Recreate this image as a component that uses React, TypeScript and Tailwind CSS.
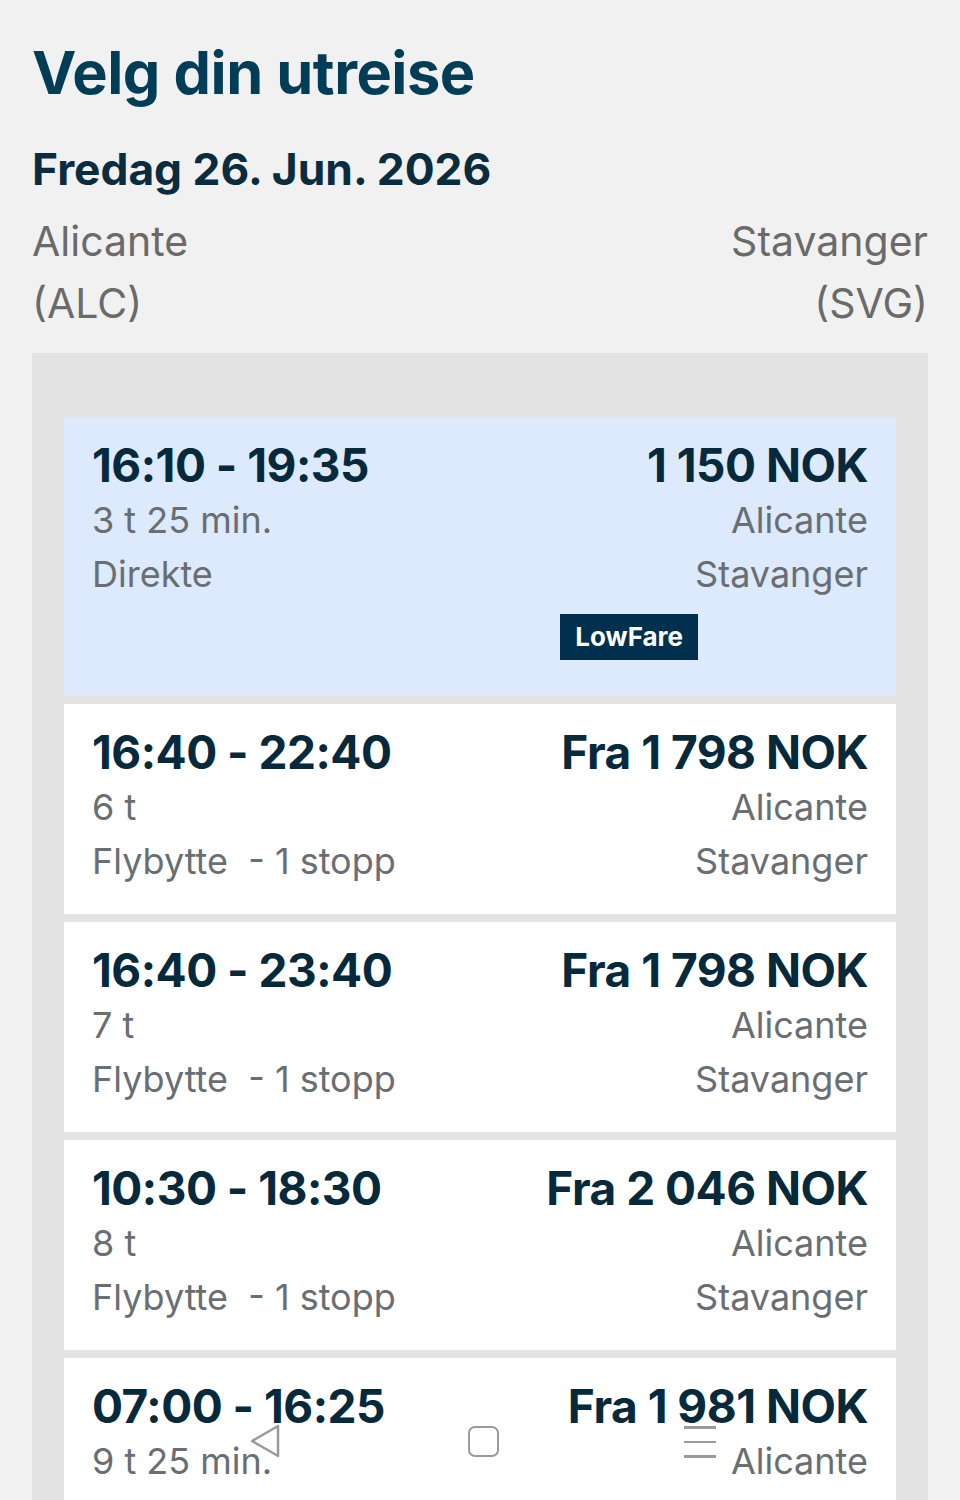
import React from 'react';

interface Flight {
  times: string;
  duration: string;
  stops: string;
  price: string;
  lowFare?: boolean;
}

const flights: Flight[] = [
  { times: '16:10 - 19:35', duration: '3 t 25 min.', stops: 'Direkte', price: '1 150 NOK', lowFare: true },
  { times: '16:40 - 22:40', duration: '6 t', stops: 'Flybytte  - 1 stopp', price: 'Fra 1 798 NOK' },
  { times: '16:40 - 23:40', duration: '7 t', stops: 'Flybytte  - 1 stopp', price: 'Fra 1 798 NOK' },
  { times: '10:30 - 18:30', duration: '8 t', stops: 'Flybytte  - 1 stopp', price: 'Fra 2 046 NOK' },
  { times: '07:00 - 16:25', duration: '9 t 25 min.', stops: 'Flybytte  - 1 stopp', price: 'Fra 1 981 NOK' },
];

const FlightCard: React.FC<{ flight: Flight }> = ({ flight }) => {
  return (
    <div
      className={`px-7 pt-5 ${flight.lowFare ? 'bg-[#dde9fc] pb-[36px]' : 'bg-white pb-[26px]'}`}
    >
      <div className="flex justify-between">
        <div className="flex flex-col">
          <span className="h-[56px] leading-[56px] text-[46px] font-bold text-[#06293c] tracking-[-0.5px]">
            {flight.times}
          </span>
          <span className="h-[54px] leading-[54px] text-[36px] text-[#696e72]">{flight.duration}</span>
          <span className="h-[54px] leading-[54px] text-[36px] text-[#696e72] whitespace-pre">{flight.stops}</span>
        </div>
        <div className="flex flex-col items-end">
          <span className="h-[56px] leading-[56px] text-[46px] font-bold text-[#06293c] tracking-[-0.5px]">
            {flight.price}
          </span>
          <span className="h-[54px] leading-[54px] text-[36px] text-[#696e72]">Alicante</span>
          <span className="h-[54px] leading-[54px] text-[36px] text-[#696e72]">Stavanger</span>
        </div>
      </div>
      {flight.lowFare && (
        <div className="flex justify-end mt-[13px] mr-[170px]">
          <span className="h-[46px] leading-[46px] px-[15px] bg-[#00304d] text-white font-bold text-[26px]">
            LowFare
          </span>
        </div>
      )}
    </div>
  );
};

export default function App() {
  return (
    <div className="relative h-[1500px] overflow-hidden bg-[#f1f1f1] px-8 font-['Inter',sans-serif]">
      <h1 className="pt-[36px] text-[59.5px] leading-[72px] font-bold text-[#023d58] tracking-[-0.5px]">
        Velg din utreise
      </h1>
      <h2 className="mt-[34px] text-[44.3px] leading-[54px] font-bold text-[#0a2c3f]">Fredag 26. Jun. 2026</h2>
      <div className="mt-[14px] flex justify-between text-[41px] leading-[62px] text-[#6a6a6a]">
        <div className="flex flex-col">
          <span>Alicante</span>
          <span>(ALC)</span>
        </div>
        <div className="flex flex-col items-end">
          <span>Stavanger</span>
          <span>(SVG)</span>
        </div>
      </div>

      <div className="mt-[19px] bg-[#e3e3e3] px-8 pt-16 pb-8 flex flex-col gap-2">
        {flights.map((f) => (
          <FlightCard key={f.times + f.price} flight={f} />
        ))}
      </div>

      {/* system nav bar overlay */}
      <div className="absolute left-0 right-0 top-[1422px] h-[40px] pointer-events-none">
        <svg className="absolute left-[248px] top-[2px]" width="34" height="34" viewBox="0 0 34 34">
          <path d="M30 2 L4 17 L30 32 Z" fill="none" stroke="#9a9a9a" strokeWidth="2.5" strokeLinejoin="round" />
        </svg>
        <div className="absolute left-[468px] top-[4px] w-[31px] h-[31px] rounded-[7px] border-[2.5px] border-[#9a9a9a]" />
        <div className="absolute left-[684px] top-[4px] w-[32px] flex flex-col gap-[12px]">
          <div className="h-[2.5px] bg-[#9a9a9a]" />
          <div className="h-[2.5px] bg-[#9a9a9a]" />
          <div className="h-[2.5px] bg-[#9a9a9a]" />
        </div>
      </div>
    </div>
  );
}
